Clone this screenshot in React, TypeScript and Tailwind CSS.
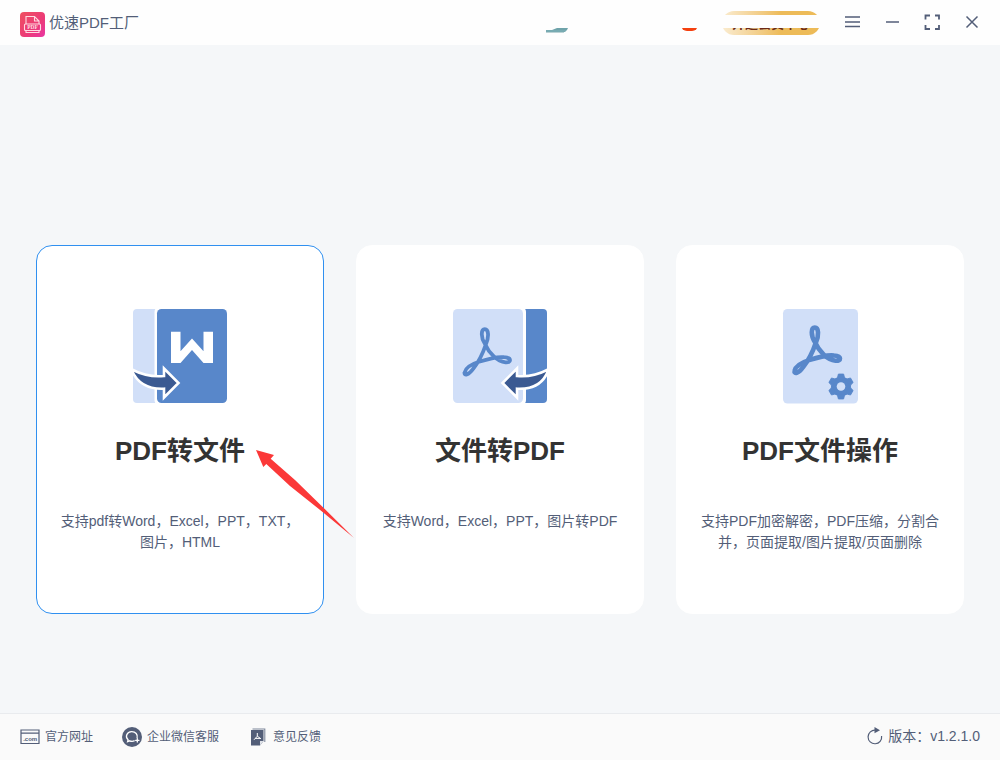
import type { ReactNode } from 'react';

const BLUE = '#5887ca';
const PALE = '#d1dff8';
const NAVY = '#3b5a92';
const SLATE = '#535e78';

function LogoIcon() {
  return (
    <svg width="25" height="25" viewBox="0 0 25 25" aria-hidden="true">
      <defs>
        <linearGradient id="logo" x1="0" y1="0" x2="1" y2="1">
          <stop offset="0" stopColor="#ef5160" />
          <stop offset="0.6" stopColor="#ec3a78" />
          <stop offset="1" stopColor="#e836a4" />
        </linearGradient>
      </defs>
      <rect width="25" height="25" rx="4" fill="url(#logo)" />
      <g fill="none" stroke="#ffdbe2" strokeWidth="1.1">
        <path d="M6 12V4.500h8.500l4.500 4.500v3M14.500 4.500V9H19" />
        <rect x="4.500" y="12" width="16" height="6.500" rx="1" />
        <path d="M6 18.500v2h13v-2" />
      </g>
      <text x="12.500" y="17.300" textAnchor="middle" fill="#ffdbe2" fontSize="5.500" fontWeight="700" fontFamily="Liberation Serif, serif">PDF</text>
    </svg>
  );
}

function WordIcon() {
  return (
    <svg width="94" height="94" viewBox="0 0 94 94" aria-hidden="true">
      <path d="M4 0h22v94H4a4 4 0 0 1-4-4V4a4 4 0 0 1 4-4z" fill={PALE} />
      <rect x="21.500" y="-3" width="75" height="100" rx="6" fill="#fff" />
      <rect x="24" y="0" width="70" height="94" rx="4.500" fill={BLUE} />
      <path d="M38 22.700h9.500v19.500L59 29.500l11.500 12.700V22.700H80V54h-9.500L59 41 47.500 54H38z" fill="#fff" />
      <path d="M-1 60.500C9 66 20 68 31 67V59.500L45.500 74 31 88.500V79.700C15 80.500 5 75 -1 62z" fill={NAVY} stroke="#fff" strokeWidth="2.600" />
    </svg>
  );
}

function AcrobatMark({ width }: { width: number }) {
  return (
    <path
      d="M32 35C27.500 28 28 20.200 31.800 20.200C35.800 20.200 36 28 33 35C30 44 24.500 54.500 20 60C15.500 66.500 10.800 66.800 11.600 63.500C12.500 59 19 55 26 52.800C34 50.200 46 47.500 51 48.200C59 48.500 58.500 54 52.500 53.400C44 52.500 36 44 32 35z"
      fill="none"
      stroke={BLUE}
      strokeWidth={width}
      strokeLinejoin="round"
    />
  );
}

function FileToPdfIcon() {
  return (
    <svg width="94" height="94" viewBox="0 0 94 94" aria-hidden="true">
      <path d="M66 0h24a4 4 0 0 1 4 4v86a4 4 0 0 1-4 4H66z" fill={BLUE} />
      <rect x="-4" y="-3" width="77" height="100" rx="6" fill="#fff" />
      <rect width="70" height="94" rx="4.500" fill={PALE} />
      <AcrobatMark width={3.8} />
      <path d="M95 60.500C85 66 76 68 64 67V59.500L49.500 74 64 88.500V79.700C80 80.500 90 75 95 62z" fill={NAVY} stroke="#fff" strokeWidth="2.600" />
    </svg>
  );
}

function PdfToolsIcon() {
  return (
    <svg width="94" height="95" viewBox="-10 0 94 95" aria-hidden="true">
      <rect width="75" height="94.500" rx="4.500" fill={PALE} />
      <g transform="translate(0 -1.700)">
        <AcrobatMark width={4.6} />
      </g>
      <g transform="translate(58 77.500)" fill={BLUE}>
        <circle r="9.500" />
        {[0, 60, 120, 180, 240, 300].map((a) => (
          <path key={a} transform={`rotate(${a})`} d="M-5-7.500Q-3-9-2.600-12.500h5.200Q3-9 5-7.500z" stroke={BLUE} strokeWidth="0.800" strokeLinejoin="round" />
        ))}
        <circle r="4.300" fill={PALE} />
      </g>
    </svg>
  );
}

function SiteIcon() {
  return (
    <svg width="20" height="16" viewBox="0 0 20 16" aria-hidden="true">
      <path d="M1 1h18v13.500H1zM1 4.200h18" fill="none" stroke={SLATE} strokeWidth="1.200" />
      <text x="10.200" y="12.300" textAnchor="middle" fontSize="6" fontWeight="700" fontFamily="Liberation Sans, sans-serif" fill={SLATE}>.com</text>
    </svg>
  );
}

function ServiceIcon() {
  return (
    <svg width="20" height="20" viewBox="0 0 20 20" aria-hidden="true">
      <circle cx="10" cy="10" r="10" fill={SLATE} />
      <path d="M12.600 13.700c-1.600.8-3.300.8-5 .1l-2 .9.500-2C2.800 9.900 4.700 4.800 9.600 4.600c3.900-.1 6.600 3 5.500 6.600" fill="none" stroke="#fff" strokeWidth="1.300" />
      <path d="M15.300 11.600v3.400M13.600 13.300h3.400" stroke="#fff" strokeWidth="1.300" strokeLinecap="round" />
    </svg>
  );
}

function FeedbackIcon() {
  return (
    <svg width="20" height="18" viewBox="-3 0 20 18" aria-hidden="true">
      <path d="M1.500 1h12.300v13" fill="none" stroke="#7d869a" strokeWidth="1.100" />
      <path d="M0 2h12.500v11L9 17.500H0z" fill={SLATE} />
      <path d="M9 17.500V13h3.500z" fill="#dfe2e8" />
      <path d="M6.300 5v3.200L3 11.800M6.300 8.200L10 10.800M4.200 10.400h5" fill="none" stroke="#fff" strokeWidth="1" />
    </svg>
  );
}

function RefreshIcon() {
  return (
    <svg width="16" height="18" viewBox="0 0 16 18" aria-hidden="true">
      <path d="M8.500 3.200A6.800 6.800 0 1 0 14.600 9" fill="none" stroke={SLATE} strokeWidth="1.200" />
      <path d="M7.500 0l5.500 3.200-5.500 3z" fill={SLATE} />
    </svg>
  );
}

function WindowButton({ label, children }: { label: string; children: ReactNode }) {
  return (
    <button type="button" aria-label={label} className="h-4 w-4">
      <svg width="16" height="16" viewBox="0 0 16 16" fill="none" stroke={SLATE} strokeWidth="1.500" aria-hidden="true">
        {children}
      </svg>
    </button>
  );
}

function Pointer() {
  return (
    <svg className="pointer-events-none absolute top-[204px] left-[219px]" width="99" height="90" viewBox="0 0 99 90" aria-hidden="true">
      <path d="M0 0L18 5 14.700 8.700 39 30 69 59.200 98 88 67.500 62.700 34 36 10.300 14 7.300 17z" fill="#fb3838" />
    </svg>
  );
}

function Card({ icon, title, text, active, children }: { icon: ReactNode; title: string; text: string; active?: boolean; children?: ReactNode }) {
  return (
    <button
      type="button"
      className={`relative flex min-h-[369px] flex-col items-center justify-start rounded-2xl border bg-white px-[22px] pt-[63px] text-center ${active ? 'border-[#3090f0]' : 'border-white'}`}
    >
      <span className="block h-24">{icon}</span>
      <span className="mt-7 text-[26px] leading-9 font-bold text-[#333333]">{title}</span>
      <span className="mt-[42px] text-sm leading-[21px]">{text}</span>
      {children}
    </button>
  );
}

export default function App() {
  return (
    <div className="flex min-h-screen flex-col bg-[#f5f7f9] font-['Liberation_Sans','Noto_Sans_CJK_SC',sans-serif] text-[#535e78]">
      <header className="flex h-[45px] items-center bg-[#fefefe] px-5">
        <div className="flex items-center gap-1 pt-1">
          <LogoIcon />
          <h1 className="pb-1 text-[15px] leading-6">优速PDF工厂</h1>
        </div>
        <div className="relative ml-auto flex h-6 items-end">
          <svg className="mr-28" width="24" height="8" viewBox="0 0 24 8" aria-hidden="true">
            <path d="M12 1h11l-1 2H7z" fill="#6fa3aa" />
            <path d="M1 3h21l-2 2H1z" fill="#4b8f98" opacity="0.75" />
            <path d="M1 5.500h18" stroke="#bcd2d5" />
          </svg>
          <span className="mr-6 mb-1 h-4 w-[17px] rounded-md bg-[#f4400f]" />
          <button type="button" className="h-6 w-[98px] rounded-full bg-linear-to-r from-[#faecd0] to-[#edbb58] to-60% pt-[2px] text-[13px] leading-5 font-bold whitespace-nowrap text-[#6b2a17]">
            开通会员中心
          </button>
          <span className="absolute inset-x-0 top-1 h-[13px] bg-[#fefefe]" />
        </div>
        <div className="ml-6 flex gap-6 pb-[2px]">
          <WindowButton label="菜单">
            <path d="M1 3h15M1 8h15M1 12.500h15" />
          </WindowButton>
          <WindowButton label="最小化">
            <path d="M2 8h13" />
          </WindowButton>
          <WindowButton label="最大化">
            <path d="M1.500 5.500v-4H6M11 1.500h4v4M15 11v4h-4M6 15H1.500v-4" strokeWidth="1.800" />
          </WindowButton>
          <WindowButton label="关闭">
            <path d="M2.500 2.500l11 11M13.500 2.500l-11 11" />
          </WindowButton>
        </div>
      </header>

      <main className="grid flex-1 grid-cols-3 items-start gap-8 px-9 pt-50 pb-8">
        <Card active icon={<WordIcon />} title="PDF转文件" text="支持pdf转Word，Excel，PPT，TXT，图片，HTML">
          <Pointer />
        </Card>
        <Card icon={<FileToPdfIcon />} title="文件转PDF" text="支持Word，Excel，PPT，图片转PDF" />
        <Card icon={<PdfToolsIcon />} title="PDF文件操作" text="支持PDF加密解密，PDF压缩，分割合并，页面提取/图片提取/页面删除" />
      </main>

      <footer className="flex h-[47px] items-center border-t border-[#e9ebee] bg-[#fafafa] px-5 text-xs">
        <nav className="flex items-center gap-[29px]">
          <a href="#site" className="flex items-center gap-[5px]">
            <SiteIcon />
            官方网址
          </a>
          <a href="#service" className="flex items-center gap-[5px]">
            <ServiceIcon />
            企业微信客服
          </a>
          <a href="#feedback" className="flex items-center gap-[5px]">
            <FeedbackIcon />
            意见反馈
          </a>
        </nav>
        <button type="button" className="ml-auto flex items-center gap-[5px] pb-[2px] text-sm">
          <RefreshIcon />
          版本：v1.2.1.0
        </button>
      </footer>
    </div>
  );
}
